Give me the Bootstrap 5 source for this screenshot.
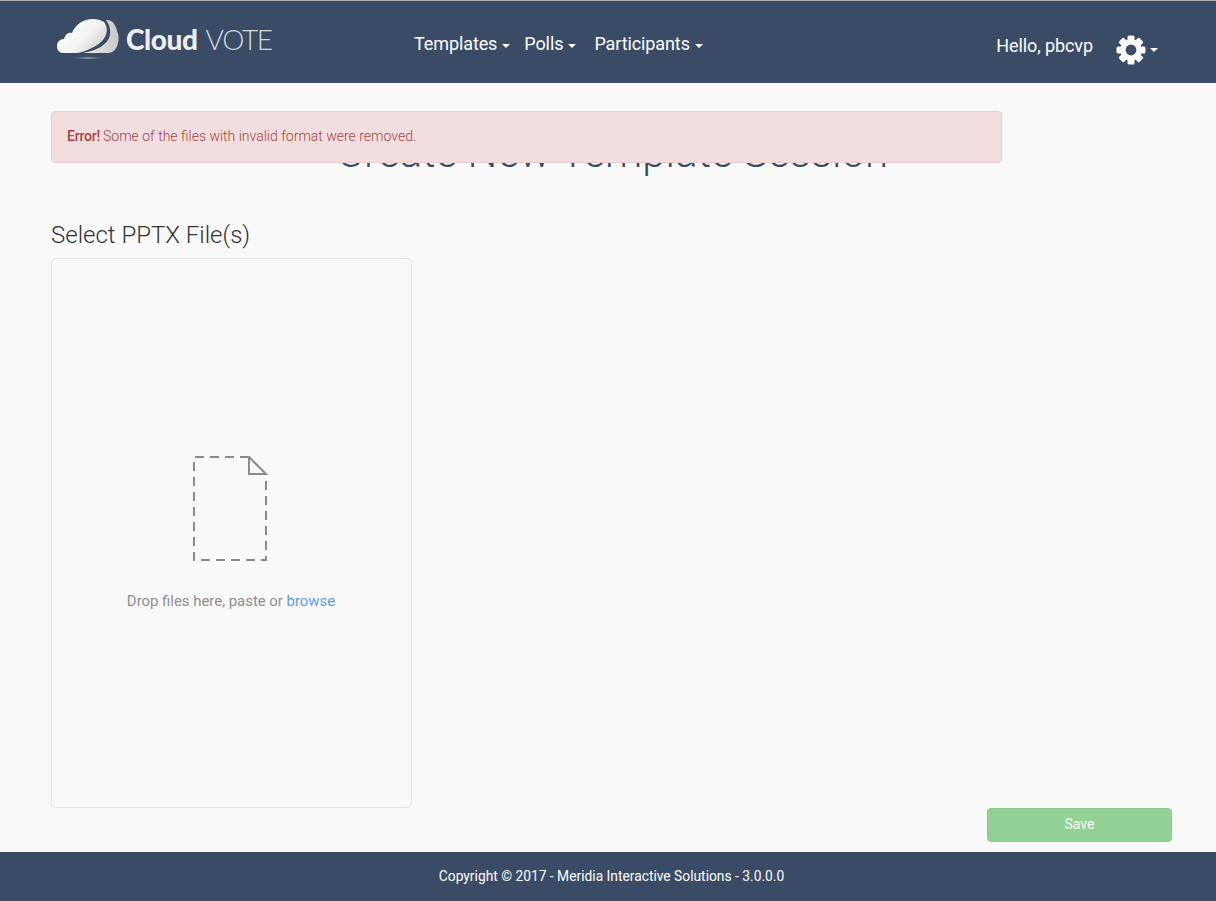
<!DOCTYPE html>
<html lang="en">
<head>
<meta charset="utf-8">
<title>CloudVOTE</title>
<link rel="stylesheet" href="https://cdn.jsdelivr.net/npm/bootstrap@5.3.0/dist/css/bootstrap.min.css">
<style>
html,body{height:100%}
body{font-family:Roboto,"Liberation Sans",sans-serif;background:#f9f9f9;color:#333;font-size:14px;font-weight:300;overflow:hidden}
.page-wrap{height:901px;display:flex;flex-direction:column}
.top-bar{height:83px;background:#3a4b65;border-top:1px solid #b0b0b0;padding:0 58px 0 56px;align-items:flex-start}
.brand-box{width:358px;padding-top:16px;gap:2px;color:#fff;text-decoration:none}
.brand-word{font-family:Lato,sans-serif;font-size:28px;line-height:44px;color:#eceef1}
.brand-word b{font-weight:900;letter-spacing:-.4px}
.brand-word span{font-weight:300;letter-spacing:-1.3px;color:#d5d9df;margin-left:8px}
.menu-row{padding-top:31px;gap:14px}
.menu-link{color:#fff;font-size:18px;font-weight:400;line-height:24px;letter-spacing:-.1px;text-decoration:none;display:flex;align-items:center}
.menu-link.menu-far{margin-left:4px}
.menu-caret{display:inline-block;width:0;height:0;border-top:4px solid #fff;border-left:4px solid transparent;border-right:4px solid transparent;margin-left:5px;margin-top:3px}
.user-box{padding-top:33px;color:#fff;font-size:18px;font-weight:400;line-height:24px;letter-spacing:-.1px}
.gear-link{margin-left:23px;display:flex;align-items:center;margin-top:4px;height:24px}
.gear-link .menu-caret{margin-left:4px;margin-top:0}
.main-area{flex:1;position:relative;padding:0 44px 0 51px;display:flex;flex-direction:column;min-height:0}
.alert-float{position:absolute;left:51px;top:28px;width:951px;height:52px;margin:0;padding:0 15px 2px;display:flex;align-items:center;gap:3px;background:#f2dede;border:1px solid #ebccd1;color:#a94442;font-size:14px;border-radius:4px}
.alert-float strong{font-weight:500;letter-spacing:-.2px}
.page-title{color:#3a4b65;font-size:42px;font-weight:300;text-align:center;margin:46px 0 0;line-height:48px;padding-left:2px}
.sub-title{font-size:24px;font-weight:300;color:#333;margin:43px 0 8px;line-height:30px}
.drop-box{width:361px;height:550px;border:1px solid #e4e4e4;border-radius:5px;background:#f9f9f9;display:flex;flex-direction:column;align-items:center;padding-top:197px;flex:none}
.drop-box svg{margin-right:4px}
.drop-text{font-family:Roboto,sans-serif;font-weight:400;color:#8f8f8f;font-size:14.9px;margin-top:29px;line-height:20px;padding-right:1px}
.drop-text a{color:#5b9ee6;text-decoration:none}
.save-row{display:flex;justify-content:flex-end;flex:none}
.btn.save-btn{width:185px;height:34px;margin-top:0;padding:0 0 2px;background:#93d095;border:1px solid #8ccb8e;color:#fff;font-size:14px;font-weight:400;border-radius:4px;opacity:1;line-height:30px}
.foot-bar{height:49px;background:#3a4b65;color:#fff;font-size:13.8px;font-weight:400;flex:none;padding-left:7px}
</style>
</head>
<body>
<div class="page-wrap">
  <nav class="top-bar d-flex flex-none">
    <a class="brand-box d-flex" href="#">
      <svg width="68" height="46" viewBox="0 0 68 46" aria-hidden="true" class="flex-none">
        <defs>
          <linearGradient id="cg" x1="0" y1="0" x2="1" y2="0.6"><stop offset="0" stop-color="#ffffff"/><stop offset="0.65" stop-color="#f4f4f4"/><stop offset="1" stop-color="#d4d4d4"/></linearGradient>
          <linearGradient id="cr" x1="0" y1="0" x2="1" y2="0"><stop offset="0" stop-color="#f0f0f0"/><stop offset="1" stop-color="#c8c8c8"/></linearGradient>
          <linearGradient id="sh" x1="0" y1="0" x2="1" y2="0"><stop offset="0" stop-color="#5b6b82" stop-opacity="0"/><stop offset=".5" stop-color="#8793a5"/><stop offset="1" stop-color="#5b6b82" stop-opacity="0"/></linearGradient>
        </defs>
        <path fill="url(#cg)" d="M7 36C3 36 1 33 1 29 1 25 4 22 8 22 9 18 12 15 16 16 19 8 27 2 37 2 41 2 45 3 48 5 52 10 52 18 46 24 40 30 30 34 22 36Z"/>
        <path fill="url(#cr)" d="M50 3C56 2 60 8 61 14 63 18 63 22 62 26 61 32 57 36 52 36L27 36C40 34 52 28 54 18 55 12 53 7 50 3Z"/>
        <rect x="16" y="40" width="32" height="2" fill="url(#sh)"/>
      </svg>
      <span class="brand-word"><b>Cloud</b><span>VOTE</span></span>
    </a>
    <div class="menu-row d-flex">
      <a class="menu-link" href="#">Templates<i class="menu-caret"></i></a>
      <a class="menu-link" href="#">Polls<i class="menu-caret"></i></a>
      <a class="menu-link menu-far" href="#">Participants<i class="menu-caret"></i></a>
    </div>
    <div class="user-box ms-auto d-flex">
      <span>Hello, pbcvp</span>
      <a class="gear-link" href="#">
        <svg width="30" height="30" viewBox="0 0 30 30" aria-hidden="true">
          <g fill="#fff">
            <rect x="11.5" y="0.5" width="7" height="29" rx="1.5"/>
            <rect x="11.5" y="0.5" width="7" height="29" rx="1.5" transform="rotate(45 15 15)"/>
            <rect x="11.5" y="0.5" width="7" height="29" rx="1.5" transform="rotate(90 15 15)"/>
            <rect x="11.5" y="0.5" width="7" height="29" rx="1.5" transform="rotate(135 15 15)"/>
          </g>
          <circle cx="15" cy="15" r="8" fill="none" stroke="#fff" stroke-width="5.5"/>
          <circle cx="15" cy="15" r="5.4" fill="#3a4b65"/>
        </svg>
        <i class="menu-caret"></i>
      </a>
    </div>
  </nav>
  <main class="main-area">
    <div class="alert alert-float" role="alert"><strong>Error!</strong> Some of the files with invalid format were removed.</div>
    <h1 class="page-title">Create New Template Session</h1>
    <h2 class="sub-title">Select PPTX File(s)</h2>
    <div class="drop-box">
      <svg width="76" height="106" viewBox="0 0 76 106" aria-hidden="true">
        <g fill="none" stroke="#8a8a8a" stroke-width="2">
          <path stroke-dasharray="9 6" d="M57 1H2V104H74V20"/>
          <path d="M57 1V18H74ZM57 1L74 18"/>
        </g>
      </svg>
      <div class="drop-text">Drop files here, paste or <a href="#">browse</a></div>
    </div>
    <div class="save-row"><button class="btn save-btn" type="button">Save</button></div>
  </main>
  <footer class="foot-bar d-flex align-items-center justify-content-center">Copyright © 2017 - Meridia Interactive Solutions - 3.0.0.0</footer>
</div>
</body>
</html>
